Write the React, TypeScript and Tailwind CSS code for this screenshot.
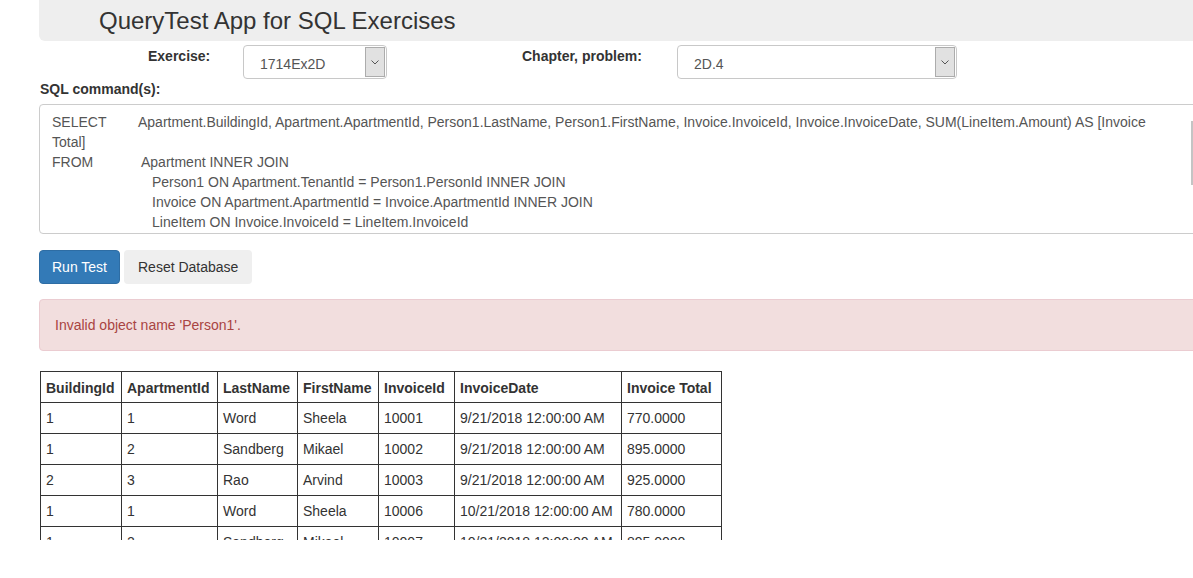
import React from "react";

const rows = [
  ["1", "1", "Word", "Sheela", "10001", "9/21/2018 12:00:00 AM", "770.0000"],
  ["1", "2", "Sandberg", "Mikael", "10002", "9/21/2018 12:00:00 AM", "895.0000"],
  ["2", "3", "Rao", "Arvind", "10003", "9/21/2018 12:00:00 AM", "925.0000"],
  ["1", "1", "Word", "Sheela", "10006", "10/21/2018 12:00:00 AM", "780.0000"],
  ["1", "2", "Sandberg", "Mikael", "10007", "10/21/2018 12:00:00 AM", "895.0000"],
  ["2", "3", "Rao", "Arvind", "10008", "10/21/2018 12:00:00 AM", "925.0000"],
];

const columns = [
  { label: "BuildingId", w: "w-[81px]" },
  { label: "ApartmentId", w: "w-[96px]" },
  { label: "LastName", w: "w-[80px]" },
  { label: "FirstName", w: "w-[81px]" },
  { label: "InvoiceId", w: "w-[76px]" },
  { label: "InvoiceDate", w: "w-[167px]" },
  { label: "Invoice Total", w: "w-[100px]" },
];

const FakeSelect = ({ value, width }: { value: string; width: string }) => (
  <div
    className={`${width} h-[34px] flex border border-[#c8c8c8] rounded-[4px] bg-white`}
  >
    <div className="flex-1 pl-[16px] pt-[8px] text-[14px] leading-[20px] text-[#555]">
      {value}
    </div>
    <div className="w-[20px] my-px mr-px flex items-center justify-center bg-[#e1e1e1] border border-[#acacac]">
      <svg width="8" height="5" viewBox="0 0 8 5">
        <path d="M0.5 0.5 L4 4 L7.5 0.5" fill="none" stroke="#555" strokeWidth="1" />
      </svg>
    </div>
  </div>
);

export default function App() {
  return (
    <div className="w-[1193px] h-[578px] bg-white overflow-hidden font-['Liberation_Sans',Arial,sans-serif] text-[#333]">
      <div className="h-[540px] overflow-hidden">
        <div className="ml-[39px] w-[1170px]">
          <div className="h-[41px] bg-[#eee] rounded-bl-[6px] flex items-center pl-[60px] text-[24px] leading-[27px] pb-px">
            QueryTest App for SQL Exercises
          </div>

          <div className="flex items-start mt-[4px] text-[14px] leading-[20px]">
            <div className="ml-[109px] w-[95px] font-bold pt-[1px]">Exercise:</div>
            <FakeSelect value="1714Ex2D" width="w-[144px]" />
            <div className="ml-[135px] w-[155px] font-bold pt-[1px]">Chapter, problem:</div>
            <FakeSelect value="2D.4" width="w-[280px]" />
          </div>

          <div className="ml-px font-bold text-[14px] leading-[20px]">SQL command(s):</div>

          <div className="mt-[5px] h-[130px] border border-[#ccc] rounded-[4px] flex text-[14px] leading-[20px] text-[#555]">
            <div className="flex-1 pl-[12px] pt-[7px] whitespace-pre">
              <div>
                <span className="inline-block w-[86px]">SELECT</span>
                Apartment.BuildingId, Apartment.ApartmentId, Person1.LastName, Person1.FirstName, Invoice.InvoiceId, Invoice.InvoiceDate, SUM(LineItem.Amount) AS [Invoice
              </div>
              <div>Total]</div>
              <div>
                <span className="inline-block w-[89px]">FROM</span>
                Apartment INNER JOIN
              </div>
              <div className="pl-[100px]">Person1 ON Apartment.TenantId = Person1.PersonId INNER JOIN</div>
              <div className="pl-[100px]">Invoice ON Apartment.ApartmentId = Invoice.ApartmentId INNER JOIN</div>
              <div className="pl-[100px]">LineItem ON Invoice.InvoiceId = LineItem.InvoiceId</div>
            </div>
            <div className="w-[17px] pt-[16px]">
              <div className="h-[64px] border-l-2 border-[#c4c4c4] bg-[#f1f1f1]" />
            </div>
          </div>

          <div className="flex gap-[4px] mt-[16px] text-[14px] leading-[20px]">
            <button className="h-[34px] px-[12px] rounded-[4px] bg-[#337ab7] border border-[#2e6da4] text-white">
              Run Test
            </button>
            <button className="h-[34px] px-[14px] rounded-[4px] bg-[#efefef] text-[#333]">
              Reset Database
            </button>
          </div>

          <div className="mt-[15px] border border-[#ebccd1] bg-[#f2dede] rounded-[4px] px-[15px] py-[15px] text-[14px] leading-[20px] text-[#a94442]">
            Invalid object name 'Person1'.
          </div>

          <table className="mt-[20px] ml-px w-[682px] table-fixed border-collapse text-[14px] leading-[20px] text-[#333]">
            <thead>
              <tr>
                {columns.map((c, idx) => (
                  <th
                    key={idx}
                    className={`${c.w} border border-[#333] px-[5px] pt-[6px] pb-[4px] text-left font-bold whitespace-nowrap`}
                  >
                    {c.label}
                  </th>
                ))}
              </tr>
            </thead>
            <tbody>
              {rows.map((r, i) => (
                <tr key={i}>
                  {r.map((cell, j) => (
                    <td
                      key={j}
                      className="border border-[#333] px-[5px] py-[5px] whitespace-nowrap"
                    >
                      {cell}
                    </td>
                  ))}
                </tr>
              ))}
            </tbody>
          </table>
        </div>
      </div>
    </div>
  );
}
